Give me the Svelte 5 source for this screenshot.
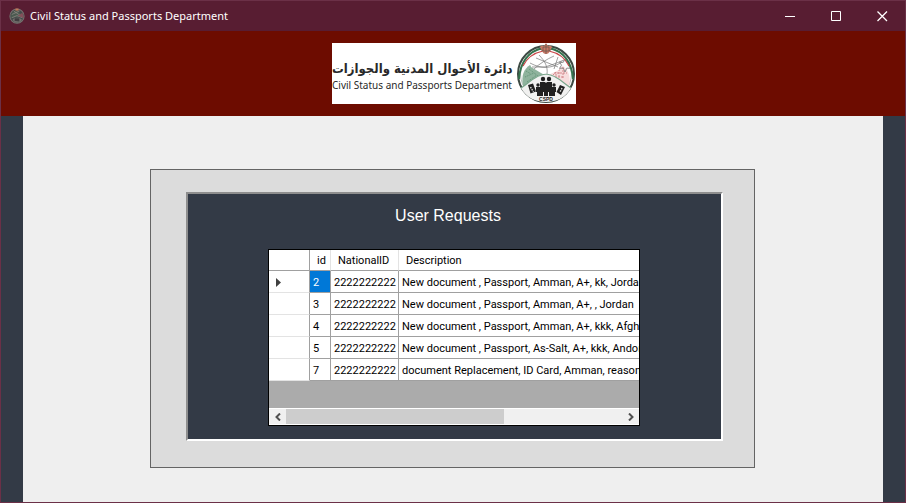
<script>
  const rows = [
    { id: 2, nationalId: '2222222222', description: 'New document , Passport, Amman, A+, kk, Jordan' },
    { id: 3, nationalId: '2222222222', description: 'New document , Passport, Amman, A+, , Jordan' },
    { id: 4, nationalId: '2222222222', description: 'New document , Passport, Amman, A+, kkk, Afghanistan' },
    { id: 5, nationalId: '2222222222', description: 'New document , Passport, As-Salt, A+, kkk, Andorra' },
    { id: 7, nationalId: '2222222222', description: 'document Replacement, ID Card, Amman, reason to replace' }
  ];
  let selected = $state(2);
</script>

{#snippet emblem()}
  <circle cx="30" cy="31" r="28" fill="#fff" stroke="#3c4a43" stroke-width="2" />
  <circle cx="30" cy="31" r="25.5" fill="#fdfdfd" stroke="#9aa39d" stroke-width=".7" />
  <path d="M7 43C5 32 8 26 14 22c5 3 10 6 18 11L12 48Z" fill="#8fb39d" />
  <path d="M53 43c2-11-1-16-6-20-5 3-10 6-17 10l19 15Z" fill="#f7dddd" />
  <path d="M10 28l5 3m-6 3 9-4m-7 9 10-7m-8-6 9 7m-13 9 12-5" stroke="#5f9273" fill="none" stroke-dasharray="1 1" />
  <path d="M37 32l3-3v6m3-9v9m4-11v12m-9-6h13m-12 4h9" stroke="#cf8085" fill="none" stroke-width=".9" stroke-dasharray="2 1" />
  <path d="M14 20 30 9l15 11-2 7-13 6-15-9Z" fill="#fff" />
  <path d="M14 20c11 6 21 6 32-1M23 12c6 6 9 12 8 19M38 13c-7 3-15 8-20 13M16 24l13 0 9-3 10-4M20 15l22 9M42 14l-4 12" stroke="#777" stroke-width=".7" fill="none" />
  <path d="m49 16 1.800 3.400 3.700-.4-2 3.200 2 3.200-3.700-.3L49 29l-1.800-3.900-3.700.3 2-3.200-2-3.200 3.700.4Z" stroke="#777" stroke-width=".8" fill="none" />
  <path d="M3 36C4 20 12 8 27 5" fill="none" stroke="#34734e" stroke-width="2" />
  <path d="M57 36C56 20 48 8 33 5" fill="none" stroke="#34734e" stroke-width="2" />
  <path d="M7 23C11 15 17 10 27 8M53 23C49 15 43 10 33 8" fill="none" stroke="#c84446" stroke-width="1.200" />
  <path d="M5 45c6-4 10-8 14-10 8-5 14-5 22 0 4 2 8 6 14 10-5 9-14 14-25 14S10 54 5 45Z" fill="#f1f1f0" />
  <path d="M5 45c6-4 10-8 14-10 8-5 14-5 22 0 4 2 8 6 14 10" fill="none" stroke="#7ba78d" stroke-width="1.200" />
  <path d="M24 4c1-2 3-1 4-1l2-3 2 3c1 0 3-1 4 1l-2 4c-1 2-2 3-4 3s-3-1-4-3Z" fill="#ca7866" />
  <path d="M27 4h6v4h-6zM24 6l3 2m9-2-3 2M30 1v10" fill="none" stroke="#6b5a4e" stroke-width=".8" />
  <g fill="#202020">
    <circle cx="27" cy="36" r="2.200" /><circle cx="33" cy="36" r="2.200" />
    <circle cx="22" cy="42" r="1.700" /><circle cx="38" cy="42" r="1.700" />
    <path d="M24 39h5l1 1 1-1h5v14h-3v-4h-1v4h-4v-4h-1v4h-3Z" /><path d="M20 44h4v9h-3v-4h-1ZM36 44h4v5h-1v4h-3Z" />
    <path d="m12 42 5-1.500 3 8-5.500 2ZM44 42l5 2-4 8-4.500-3Z" />
  </g>
  <path d="m14.500 44 3 5M46 45l-2 4" stroke="#ddd" stroke-width="1.400" stroke-dasharray="1.500 1" />
  <text x="30" y="58" text-anchor="middle" font-family="Liberation Sans, sans-serif" font-size="5" font-weight="bold" fill="#222">CSPD</text>
{/snippet}

<div class="window">
  <header class="titlebar">
    <svg class="app-icon" viewBox="0 0 60 61" aria-hidden="true">
      <circle cx="30" cy="31" r="27" fill="#44494a" stroke="#77716f" stroke-width="4" />
      <path d="M8 40C5 20 15 10 30 8l22 22-22 4Z" fill="#4b5a50" />
      <path d="m10 25 30-14M18 12l27 18M10 37l20-8 22 9" stroke="#8b8580" stroke-width="3" fill="none" />
      <path d="m33 30 18-12 5 20Z" fill="#84505a" />
      <path d="M13 45c4-9 28-12 36 0-6 14-29 15-36 0Z" fill="#73706d" />
      <path d="M21 50V39h18v12Z" fill="#403d40" /><path d="M24 2h12v8H24Z" fill="#c1785a" />
    </svg>
    <span class="caption">Civil Status and Passports Department</span>
    <div class="controls">
      <button aria-label="Minimize"><svg viewBox="0 0 11 11"><path d="M0 5.500h10" /></svg></button>
      <button aria-label="Maximize"><svg viewBox="0 0 11 11"><path d="M.5.5h9v9h-9Z" /></svg></button>
      <button aria-label="Close"><svg viewBox="0 0 11 11"><path d="m.5.5 9.500 9.500M10 .5.5 10" stroke-width="1.300" /></svg></button>
    </div>
  </header>

  <div class="banner">
    <div class="logo">
      <div class="logo-text">
        <span class="arabic" lang="ar" dir="rtl">دائرة الأحوال المدنية والجوازات</span>
        <span class="english">Civil Status and Passports Department</span>
      </div>
      <svg class="emblem" viewBox="0 0 60 61" role="img" aria-label="CSPD">{@render emblem()}</svg>
    </div>
  </div>

  <main>
    <section class="outer">
      <div class="inner">
        <h1>User Requests</h1>
        <div class="grid">
          <div class="viewport">
            <table>
              <colgroup><col class="c-mark" /><col class="c-id" /><col class="c-nat" /><col /></colgroup>
              <thead>
                <tr><th></th><th>id</th><th>NationalID</th><th>Description</th></tr>
              </thead>
              <tbody>
                {#each rows as row (row.id)}
                  <tr onclick={() => (selected = row.id)}>
                    <th scope="row">
                      {#if selected === row.id}<svg class="marker" viewBox="0 0 5 9"><path d="M0 0 5 4.500 0 9Z" /></svg>{/if}
                    </th>
                    <td class:selected={selected === row.id}>{row.id}</td>
                    <td>{row.nationalId}</td>
                    <td>{row.description}</td>
                  </tr>
                {/each}
              </tbody>
            </table>
          </div>
          <div class="scrollbar">
            <button aria-label="Scroll left"><svg viewBox="0 0 6 8"><path d="M5 .5 1.500 4 5 7.500" /></svg></button>
            <div class="track"><div class="thumb"></div></div>
            <button aria-label="Scroll right"><svg viewBox="0 0 6 8"><path d="M1 .5 4.500 4 1 7.500" /></svg></button>
          </div>
        </div>
      </div>
    </section>
  </main>
</div>

<style>
  :global(body) { margin: 0; }
  * { box-sizing: border-box; }
  .window {
    min-height: 100vh;
    display: flex;
    flex-direction: column;
    border: 1px solid #6b3047;
    background: #333a46;
    font-family: "Liberation Sans", Arial, sans-serif;
  }
  .titlebar {
    height: 30px;
    display: flex;
    align-items: center;
    padding-left: 8px;
    background: #581d32;
    color: #fff;
  }
  .app-icon { width: 16px; height: 16px; }
  .caption { flex: 1; margin-left: 5px; font: 11px/16px "Noto Sans", sans-serif; white-space: nowrap; }
  .controls { display: flex; height: 100%; }
  button { border: 0; padding: 0; background: none; display: flex; align-items: center; justify-content: center; }
  .controls button { width: 46px; }
  .controls svg { width: 11px; height: 11px; fill: none; stroke: #fff; }
  .banner { height: 85px; display: flex; align-items: center; justify-content: center; padding-left: 2px; background: #6d0c00; }
  .logo { display: flex; justify-content: space-between; width: 244px; height: 61px; background: #fff; }
  .logo-text { display: flex; flex-direction: column; align-items: flex-start; padding-top: 17px; white-space: nowrap; color: #292929; }
  .arabic { font: bold 13px/18px "DejaVu Sans Condensed", "DejaVu Sans", sans-serif; }
  .english { font: 10px/14px "Noto Sans", sans-serif; }
  .emblem { flex: none; width: 60px; height: 61px; }
  main { flex: 1; margin: 0 22px; padding: 53px 128px 34px 127px; background: #efefef; }
  .outer { border: 1px solid #646464; background: #dcdcdc; padding: 22px 31px 26px 35px; }
  .inner {
    border: 2px solid;
    border-color: #8e8e8e #fff #fff #8e8e8e;
    background: #333a46;
    padding: 12px 81px 13px 80px;
  }
  h1 { margin: 0 0 23px; padding-right: 12px; text-align: center; font-size: 16px; line-height: 20px; font-weight: 400; color: #fff; }
  .grid { border: 1px solid #000; background: #ababab; }
  .viewport { height: 158px; overflow: hidden; }
  table { width: 100%; table-layout: fixed; border-collapse: separate; border-spacing: 0; font: 11px/14px Roboto, "Liberation Sans", sans-serif; color: #000; }
  .c-mark { width: 41px; }
  .c-id { width: 21px; }
  .c-nat { width: 68px; }
  th, td {
    height: 22px;
    padding: 2px 3px 0;
    border-right: 1px solid #a0a0a0;
    border-bottom: 1px solid #a0a0a0;
    background: #fff;
    font-weight: 400;
    text-align: left;
    white-space: nowrap;
  }
  thead th { height: 21px; padding-left: 7px; border-right-color: #e3e3e3; }
  thead th:first-child { border-right-color: #a0a0a0; }
  tbody th { border-bottom-color: #e3e3e3; padding-left: 7px; }
  th:last-child, td:last-child { border-right: 0; }
  td.selected { background: #0078d7; color: #fff; }
  .marker { display: block; width: 5px; height: 9px; fill: #404040; }
  .scrollbar { height: 17px; display: flex; background: #f0f0f0; border-top: 1px solid #fff; border-bottom: 1px solid #fff; }
  .scrollbar button { width: 17px; }
  .scrollbar svg { width: 6px; height: 8px; fill: none; stroke: #505050; stroke-width: 2; }
  .track { flex: 1; }
  .thumb { width: 65%; height: 100%; background: #cdcdcd; }
</style>
